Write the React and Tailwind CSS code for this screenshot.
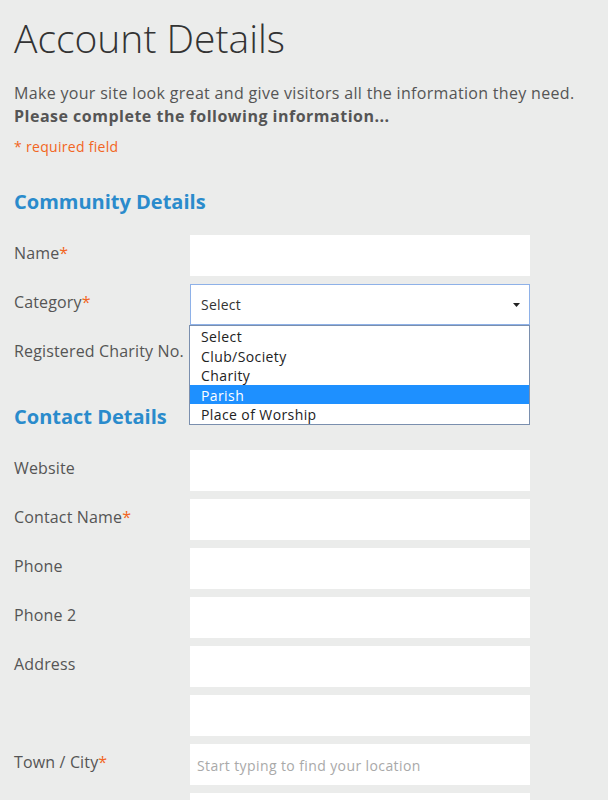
import React from "react";

const Req = () => <span className="text-[#f26522]">*</span>;

const Field = ({ label, required, children }) => (
  <div className="flex items-start">
    <div className="w-[176px] pt-[6px] text-[16px] leading-[24px] tracking-[0.15px] text-[#555]">
      {label}
      {required && <Req />}
    </div>
    {children || <input type="text" className="w-[340px] h-[41px] bg-white outline-none px-[7px] text-[14px]" />}
  </div>
);

const options = ["Select", "Club/Society", "Charity", "Parish", "Place of Worship"];

const App = () => {
  return (
    <div
      className="min-h-screen bg-[#ebeceb] pl-[14px] pt-[14px] pb-10 text-[#555]"
      style={{ fontFamily: '"Open Sans", "Liberation Sans", sans-serif' }}
    >
      <h1 className="text-[39px] leading-[48px] font-light text-[#333]">Account Details</h1>

      <p className="mt-[20px] text-[16px] leading-[23px] tracking-[0.32px]">
        Make your site look great and give visitors all the information they need.
        <br />
        <strong className="font-bold tracking-[0.5px]">Please complete the following information...</strong>
      </p>

      <p className="mt-[9px] text-[14px] leading-[20px] tracking-[0.3px] text-[#f26522]">* required field</p>

      <h2 className="mt-[31px] mb-[19px] text-[20px] leading-[28px] font-bold text-[#2a8bcc]">
        Community Details
      </h2>

      <div className="flex flex-col gap-[8px]">
        <Field label="Name" required />
        <Field label="Category" required>
          <div className="relative">
            <div className="w-[340px] h-[41px] bg-white border border-[#8eb1e8] flex items-center justify-between pl-[10px] pr-[9px] text-[14px] tracking-[0.2px] text-[#333]">
              <span>Select</span>
              <svg width="7" height="4" viewBox="0 0 7 4">
                <path d="M0 0h7L3.5 4z" fill="#222" />
              </svg>
            </div>
            <ul className="absolute left-[-1px] top-[41px] z-10 w-[341px] bg-white border border-[#7a8fae] text-[14px] leading-[19.6px] tracking-[0.4px] text-[#222]">
              {options.map((o) => (
                <li
                  key={o}
                  className={
                    o === "Parish"
                      ? "bg-[#1e90ff] text-white pl-[11px] pt-[1px] h-[19.6px]"
                      : "pl-[11px] pt-[1px] h-[19.6px]"
                  }
                >
                  {o}
                </li>
              ))}
            </ul>
          </div>
        </Field>
        <Field label="Registered Charity No." />
      </div>

      <h2 className="mt-[29px] mb-[19px] text-[20px] leading-[28px] font-bold text-[#2a8bcc]">
        Contact Details
      </h2>

      <div className="flex flex-col gap-[8px]">
        <Field label="Website" />
        <Field label="Contact Name" required />
        <Field label="Phone" />
        <Field label="Phone 2" />
        <Field label="Address" />
        <Field label="" />
        <Field label="Town / City" required>
          <input
            type="text"
            placeholder="Start typing to find your location"
            className="w-[340px] h-[41px] bg-white outline-none px-[7px] pt-[2px] text-[14px] tracking-[0.4px] placeholder:text-[#a9a9a9]"
          />
        </Field>
        <Field label="" />
      </div>
    </div>
  );
};

export default App;
